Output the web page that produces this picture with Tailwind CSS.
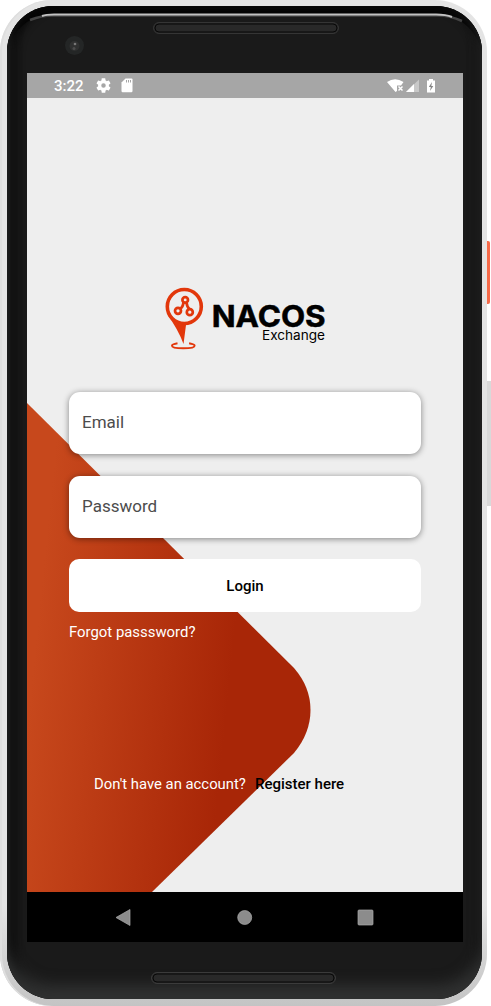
<!DOCTYPE html>
<html lang="en">
<head>
<meta charset="utf-8">
<title>NACOS Exchange</title>
<script src="https://cdn.jsdelivr.net/npm/@tailwindcss/browser@4"></script>
</head>
<body class="w-[491px] h-[1006px] overflow-hidden bg-white font-[Roboto,sans-serif]">
<div class="relative w-[491px] h-[1006px] overflow-hidden">
  <div class="absolute left-[485px] top-[241px] w-[5px] h-[63px] rounded-r-[2px] bg-[#f76b4a]"></div>
  <div class="absolute left-[485px] top-[381px] w-[6px] h-[125px] bg-[#d9d9d9]"></div>
  <div class="relative w-[487px] h-[1006px] rounded-[52px] bg-linear-to-b from-[#e4e4e4] from-90% to-[#c4c4c4] pt-[6px] pl-[7px] pr-[5px] pb-[7px] shadow-[inset_2px_0_0_#dedede]">
    <div class="relative h-[993px] rounded-[46px] bg-[#1a1a1a] overflow-hidden pl-5 pr-[19px] flex flex-col shadow-[inset_0_-14px_14px_#303131,inset_9px_0_8px_#080808,inset_-6px_0_8px_#101010,inset_0_8px_0_#050505]">
      <svg class="absolute left-0 top-0 w-[475px] h-[67px]" viewBox="7 6 475 67">
        <path d="M30 20 Q42 15.500 52 15.500 H438 Q450 15.500 462 21" fill="none" stroke="#454545" stroke-width="2.500"/>
        <path d="M42 16 Q46 14.500 54 14.500 H436 Q446 14.500 452 17" fill="none" stroke="#c2c2c2" stroke-width="2"/>
        <rect x="153.500" y="22.500" width="185" height="11" rx="5.500" fill="#262626" stroke="#353535"/>
        <rect x="155" y="24" width="182" height="8" rx="4" fill="#292929" stroke="#080808"/>
        <circle cx="74.500" cy="45.500" r="9.500" fill="#242626"/>
        <circle cx="74.500" cy="46" r="5" fill="#303131"/>
        <circle cx="75" cy="44" r="1.300" fill="#777"/>
        <circle cx="74" cy="48.500" r="1.500" fill="#4d4d4d"/>
      </svg>
      <div class="mt-[67px] h-[869px] w-[436px] flex flex-col bg-[#eee] shrink-0 relative">
        <header class="h-[25px] bg-[#a6a6a6] flex items-center pl-[27px] text-white shrink-0">
          <span class="text-[15px] leading-[25px] w-[42px] font-medium pt-[2px]">3:22</span>
          <svg class="w-[15px] h-[15px]" viewBox="2 2 20 20"><path fill="#fff" d="M19.140 12.940c.04-.3.06-.61.06-.94s-.02-.64-.07-.94l2.030-1.580a.49.490 0 0 0 .12-.61l-1.920-3.320a.488.488 0 0 0-.59-.22l-2.390.96c-.5-.38-1.030-.7-1.620-.94l-.36-2.540a.484.484 0 0 0-.48-.41h-3.840c-.24 0-.43.17-.47.41l-.36 2.540c-.59.24-1.130.57-1.620.94l-2.390-.96a.48.480 0 0 0-.59.220L2.740 8.870c-.12.210-.08.47.12.61l2.030 1.580c-.05.3-.09.63-.09.94s.02.64.07.94l-2.030 1.580a.49.490 0 0 0-.12.610l1.920 3.320c.12.22.37.290.59.22l2.390-.96c.5.38 1.030.7 1.620.94l.36 2.540c.05.24.24.41.48.41h3.840c.24 0 .44-.17.47-.41l.36-2.540c.59-.24 1.130-.56 1.620-.94l2.390.96c.22.08.47 0 .59-.22l1.920-3.320a.49.490 0 0 0-.12-.61l-2.010-1.580zM12 15a3 3 0 1 1 0-6 3 3 0 0 1 0 6z"/></svg>
          <svg class="ml-[10px] w-[12px] h-[15px]" viewBox="0 0 12 15"><path fill="#fff" d="M4.500.5H10.500Q11.500.5 11.500 1.500V13Q11.500 14.300 10.300 14.300H1.700Q.5 14.300.5 13V4.500z"/><path stroke="#a6a6a6" d="M5.500 2v2.500M7.500 2v2.500M9.500 2v2.500"/></svg>
          <svg class="ml-auto mr-[25px] w-[54px] h-[18px]" viewBox="384 77 54 18">
            <path fill="#fff" d="M387 82Q395 76.500 403.500 82L401 85.500H397V91L395.500 92z"/>
            <path d="M398.500 86.500l4 4m0-4l-4 4" stroke="#fff" stroke-width="1.500"/>
            <path d="M406 92h13V79.500z" fill="#c8c8c8"/><path d="M406 92h8v-8z" fill="#fff"/>
            <path d="M429 79h4v1.500h2V92.500h-8V80.500h2z" fill="#fff"/><path d="M432 82l-3.200 5h2l-.8 4 3.300-5h-2z" fill="#858585"/>
          </svg>
        </header>
        <main class="relative h-[794px] pl-[42px] pr-[42px] flex flex-col">
          <svg class="absolute left-0 top-0 w-[436px] h-[794px]" viewBox="27 98 436 794">
            <defs><linearGradient id="g" gradientUnits="userSpaceOnUse" x1="35" y1="650" x2="231" y2="670"><stop stop-color="#c7481c"/><stop offset="1" stop-color="#a82607"/></linearGradient></defs>
            <path d="M27 403L294 668Q310.500 687 310.500 710T294 753L152 892H27z" fill="url(#g)"/>
          </svg>
          <svg class="relative mt-[187px] ml-[91px] w-[170px] h-[70px] shrink-0" viewBox="160 285 170 70">
            <g fill="none" stroke="#e2370b">
              <circle cx="184.300" cy="306.500" r="17" stroke-width="3.600"/>
              <g stroke-width="2.700"><circle cx="185.200" cy="299.900" r="2.800"/><circle cx="178" cy="310.800" r="3"/><circle cx="189.800" cy="312.200" r="3"/><path d="M183.500 302Q183 307 180.500 308.500M186.500 302.500Q187 307 189.500 309"/></g>
              <path d="M177.500 343.300q-5.500 1-5.500 2.400c0 2 5.500 2.500 11.300 2.500s11.300-.6 11.300-2.500q0-1.400-5.500-2.400" stroke-width="2"/>
            </g>
            <path d="M167.500 315Q175 325 186 325L183.500 344Q178 329 167.500 315z" fill="#e2370b"/>
            <text x="211.700" y="327" textLength="114" lengthAdjust="spacingAndGlyphs" font-family="Inter, sans-serif" font-weight="700" font-size="30" stroke="#000" stroke-width=".5">NACOS</text>
            <text x="262" y="340" textLength="63" lengthAdjust="spacingAndGlyphs" font-family="Inter, sans-serif" font-size="13">Exchange</text>
          </svg>
          <div class="relative mt-[37px] h-[62px] rounded-[11px] bg-white shadow-[0_1px_6px_rgba(0,0,0,0.45)] flex items-center pl-[13px] text-[17px] text-[#4c4c4c] shrink-0">Email</div>
          <div class="relative mt-[22px] h-[62px] rounded-[11px] bg-white shadow-[0_1px_6px_rgba(0,0,0,0.45)] flex items-center pl-[13px] text-[17px] text-[#4c4c4c] shrink-0">Password</div>
          <button class="relative mt-[21px] pt-[2px] h-[53px] rounded-[10px] bg-white text-[15px] font-medium text-black shrink-0">Login</button>
          <a class="relative mt-[10px] text-[14.900px] leading-5 text-white">Forgot passsword?</a>
          <div class="relative mt-[132px] pl-[25px] text-[15px] leading-5 text-white flex"><span class="w-[161px] text-[14.850px]">Don't have an account?</span><a class="font-medium text-black">Register here</a></div>
        </main>
        <footer class="h-[50px] bg-black shrink-0">
          <svg class="w-[436px] h-[50px]" viewBox="27 892 436 50" fill="#8c8c8c" stroke="#aaa" stroke-width=".7"><path d="M116 917.500L130 909.500V925.500z"/><circle cx="244.700" cy="917.500" r="7"/><rect x="358" y="910" width="15" height="15" rx="1"/></svg>
        </footer>
      </div>
      <svg class="absolute left-[140px] top-[960px] w-[196px] h-[20px]" viewBox="147 966 196 20"><rect x="151.500" y="972.500" width="184" height="11" rx="5.500" fill="#262626" stroke="#3b3b3b"/><rect x="153" y="974" width="181" height="8" rx="4" fill="#292929" stroke="#080808"/></svg>
    </div>
  </div>
</div>
</body>
</html>
